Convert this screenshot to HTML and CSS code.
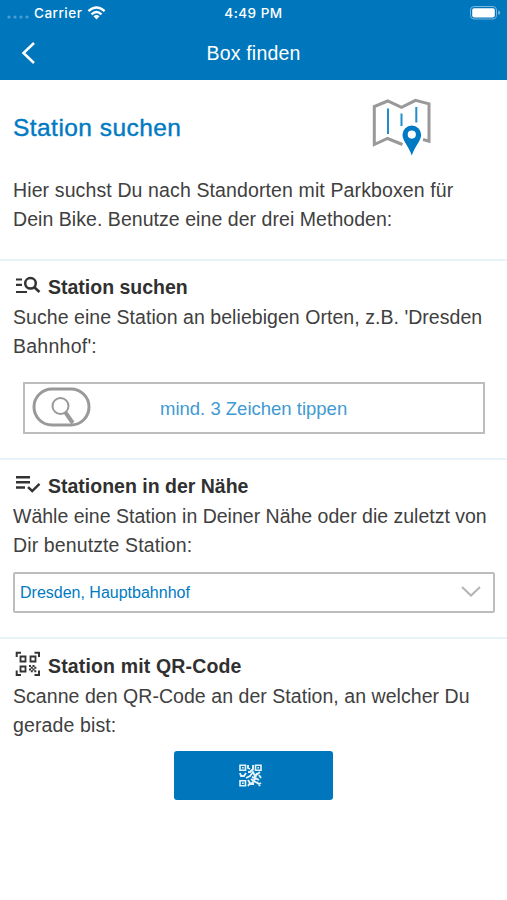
FILE: index.html
```html
<!DOCTYPE html>
<html lang="de">
<head>
<meta charset="utf-8">
<title>Box finden</title>
<link rel="stylesheet" href="styles.css">
</head>
<body>
<header class="top">
  <div class="status">
    <div class="carrier">
      <svg class="dots" width="22" height="4" viewBox="0 0 22 4"><circle cx="2" cy="2" r="1.6"/><circle cx="8" cy="2" r="1.6"/><circle cx="14" cy="2" r="1.6"/><circle cx="20" cy="2" r="1.6"/></svg>
      <span class="carrier-name">Carrier</span>
      <svg class="wifi" width="19" height="14" viewBox="0 0 18 14"><g fill="none" stroke="#fff" stroke-width="2.4"><path d="M.9 5.2Q9-2.1 17.100 5.200"/><path d="M4 8.300Q9 3.900 14 8.300"/></g><path fill="#fff" d="M6 10.300Q9 7.900 12 10.300L9 13.400Z"/></svg>
    </div>
    <span class="time">4:49 PM</span>
    <svg class="battery" width="31" height="14" viewBox="0 0 31 14"><rect x=".5" y=".5" width="26" height="12.500" rx="3.500" fill="none" stroke="#78b5dc"/><rect x="2.200" y="2.200" width="22.600" height="9.200" rx="1.800" fill="#fff"/><path d="M28.200 4.500q2 .6 2 2.300t-2 2.300z" fill="#78b5dc"/></svg>
  </div>
  <div class="nav">
    <svg class="back" width="16" height="24" viewBox="0 0 16 24"><path d="M14 2 3.500 12 14 22" fill="none" stroke="#fff" stroke-width="2.500"/></svg>
    <h1>Box finden</h1>
  </div>
</header>
<main>
  <section class="intro">
    <div class="intro-head">
      <h2>Station suchen</h2>
      <svg width="60" height="60" viewBox="0 0 60 60">
        <path d="M30.500 46.500 15.500 40.500 2.300 46.500V8.500L15.700 3 29.500 9.300 43.500 2.300 57 5.800V43.200L51 41.500" fill="none" stroke="#999" stroke-width="3"/>
        <path d="M16 10.500V36M29.500 15.500V28M44.300 9V24.500" stroke="#218dcc" stroke-width="2"/>
        <path fill="#007ac3" fill-rule="evenodd" d="M39.800 27.500a9.300 9.300 0 0 0-9.300 9.300c0 6 6 11 9.300 20.700 3.300-9.700 9.300-14.700 9.300-20.700a9.300 9.300 0 0 0-9.300-9.300Zm0 5a4.100 4.100 0 1 1 0 8.200 4.100 4.100 0 0 1 0-8.200Z"/>
      </svg>
    </div>
    <p><span class="line loose">Hier suchst Du nach Standorten mit Parkboxen für</span><span class="line">Dein Bike. Benutze eine der drei Methoden:</span></p>
  </section>
  <section class="search">
    <h3><svg width="26" height="22" viewBox="0 0 26 22"><g fill="none" stroke="#333" stroke-width="2.200"><path d="M1 4.500H7M1 9.800H7M1 17H12"/><circle cx="15.500" cy="8.300" r="5.300" stroke-width="2.500"/><path d="M19.300 12.200 24.500 17" stroke-width="2.600"/></g></svg>Station suchen</h3>
    <p><span class="line">Suche eine Station an beliebigen Orten, z.B. 'Dresden</span><span class="line short">Bahnhof':</span></p>
    <div class="field">
      <svg width="60" height="42" viewBox="0 0 60 42"><g fill="none" stroke="#999"><rect x="2" y="2" width="55" height="36" rx="18" stroke-width="3"/><circle cx="28.500" cy="19" r="8" stroke-width="2"/><path d="M33.500 25.500 40.800 36" stroke-width="4"/></g></svg>
      <span class="hint">mind. 3 Zeichen tippen</span>
    </div>
  </section>
  <section class="near">
    <h3><svg width="26" height="22" viewBox="0 0 26 22"><path d="M1 3.200H15M1 8.200H15M1 13.500H10M13 13.200 17.200 17 24.500 9.800" fill="none" stroke="#333" stroke-width="2.400"/></svg>Stationen in der Nähe</h3>
    <p><span class="line tight">Wähle eine Station in Deiner Nähe oder die zuletzt von</span><span class="line loose">Dir benutzte Station:</span></p>
    <div class="select">
      <span>Dresden, Hauptbahnhof</span>
      <svg width="20" height="12" viewBox="0 0 20 12"><path d="M1 1 10 9.500 19 1" fill="none" stroke="#b4b4b4" stroke-width="2"/></svg>
    </div>
  </section>
  <section class="code">
    <h3><svg class="scan" width="26" height="26" viewBox="0 0 26 26"><g fill="none" stroke="#333" stroke-width="2"><path d="M1.700 6V1.700H6M19.500 1.700H24V6M1.700 19.500V24H6M19.500 24H24V19.500"/><path d="M5.500 5.500h5v5h-5zM15.500 5.500h5v5h-5zM5.500 15.500h5v5h-5z" stroke-width="1.800"/></g><path fill="#333" d="M14 14h2v2h-2zM17.500 14h2v2h-2zM15.800 15.800h2v2h-2zM19.300 15.800h2v2h-2zM14 17.500h2v2h-2zM17.500 17.500h2v2h-2zM15.800 19.300h2v2h-2zM19.300 19.300h2v2h-2z"/></svg>Station mit QR-Code</h3>
    <p><span class="line">Scanne den QR-Code an der Station, an welcher Du</span><span class="line loose">gerade bist:</span></p>
    <button class="scan-button" type="button" aria-label="QR-Code scannen">
      <svg width="23" height="23" viewBox="0 0 23 23"><g fill="none" stroke="#e4f2fa" stroke-width="1.600"><path d="M1 1.200h5.500v5H1zM16.500 1.200H22v5h-5.500zM1 16.700h5.500v5H1z"/></g><path fill="#e4f2fa" d="M3 3h1.700v1.500H3zM18.500 3h1.500v1.500h-1.500zM3 18.500h1.700V20H3z"/><path d="M9 1v3l2 1M14 1v4l-3 3H9M1 9l1 3h3l2-3M7 14l4-2 3-4 2 4 5-4M13 13l3 1 4 2M9 16l2 3-2 3M12 15l3 2-3 3h3M18 9l-3 8 5 3 2-1M18 18l3 4M20 11l2 3" fill="none" stroke="#e4f2fa" stroke-width="1.900"/></svg>
    </button>
  </section>
</main>
</body>
</html>
```
FILE: styles.css
```css
* { box-sizing: border-box; }
body {
  margin: 0;
  background: #fff;
  color: #404040;
  font: 19.5px/29.4px "Liberation Sans", Arial, sans-serif;
}
svg { display: block; flex: none; }
h1, h2, h3, p { margin: 0; }
.top { height: 80px; background: #0077bd; color: #fff; }
.status {
  display: grid;
  grid-template-columns: 1fr auto 1fr;
  align-items: center;
  height: 26px;
  padding: 0 7px;
  font: 500 13.5px/26px Inter, sans-serif;
  letter-spacing: .5px;
}
.carrier { display: flex; align-items: center; }
.dots { fill: #4c9fd3; margin: 7px 5px 0 0; }
.wifi { margin-left: 5px; }
.battery { justify-self: end; margin-right: -1px; }
.nav {
  display: grid;
  grid-template-columns: 40px 1fr 40px;
  align-items: center;
  height: 54px;
  padding: 0 20px;
}
h1 { padding-top: 1px; font-size: 19.5px; font-weight: 400; text-align: center; letter-spacing: .2px; }
.intro { height: 179px; padding: 18px 13px 0; }
.intro-head { display: flex; justify-content: space-between; height: 78px; padding-right: 62px; }
h2 {
  padding-top: 15px;
  font-size: 24.5px;
  font-weight: 400;
  letter-spacing: .45px;
  color: #007ac3;
  -webkit-text-stroke: .4px #007ac3;
}
.line { display: block; white-space: nowrap; letter-spacing: .05px; }
.loose { letter-spacing: .12px; }
.short { letter-spacing: .25px; }
.tight { letter-spacing: 0; }
.search, .near, .code { border-top: 2px solid #e6f3f8; padding: 12px 13px 0; }
.search { height: 199px; }
.near { height: 179px; }
.code { padding-top: 13px; }
h3 {
  display: flex;
  align-items: center;
  gap: 7px;
  height: 30px;
  padding-left: 2px;
  font-size: 19.5px;
  color: #303030;
}
h3 svg { margin-bottom: 4px; }
.code h3 { letter-spacing: .15px; }
.scan { margin-bottom: 6px; }
.field {
  display: flex;
  align-items: center;
  height: 52px;
  margin: 20px 9px 0 10px;
  padding-left: 7px;
  border: 2px solid #bdbdbd;
  color: #409ad2;
}
.hint { margin-left: 68px; padding-top: 1px; font-size: 18.5px; }
.select {
  display: flex;
  align-items: center;
  justify-content: space-between;
  height: 41px;
  margin: 11px -1px 0 0;
  padding: 0 12px 0 5px;
  border: 2px solid #bdbdbd;
  border-radius: 2px;
  font-size: 16px;
  color: #007ac3;
}
.scan-button {
  display: grid;
  place-items: center;
  width: 159px;
  height: 49px;
  margin: 10px auto 0;
  padding: 0 6px 0 0;
  border: 0;
  border-radius: 3px;
  background: #0077bd;
}
```
